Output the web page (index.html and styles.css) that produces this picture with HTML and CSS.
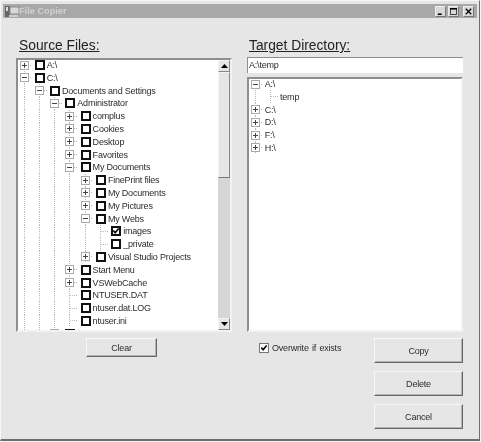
FILE: index.html
```html
<!DOCTYPE html>
<html lang="en">
<head>
<meta charset="utf-8">
<title>File Copier</title>
<link rel="stylesheet" href="styles.css">
</head>
<body>
<div class="window">
  <div class="titlebar">
    <svg class="appicon" width="15" height="13" viewBox="0 0 15 13"><rect x="0" y="1" width="5" height="11" fill="#666"/><rect x="1" y="2" width="2" height="4" fill="#ddd"/><rect x="5" y="2" width="9" height="7" fill="#d8d8d8" stroke="#8a8a8a"/><rect x="4" y="10" width="9" height="2" fill="#ccc"/></svg>
    <span class="title">File Copier</span>
    <div class="controls">
      <button class="ctl"><svg width="9" height="9" viewBox="0 0 9 9"><rect x="1" y="7" width="5" height="2" fill="#000"/></svg></button>
      <button class="ctl maxbtn"><svg width="9" height="9" viewBox="0 0 9 9"><path d="M0 .5h8.5v8H.5V1" fill="none" stroke="#000"/><rect x="0" y="0" width="9" height="2" fill="#000"/></svg></button>
      <button class="ctl closebtn"><svg width="9" height="9" viewBox="0 0 9 9"><path d="M1 1l7 7M8 1L1 8" stroke="#000" stroke-width="1.6" fill="none"/></svg></button>
    </div>
  </div>
  <div class="content">
    <div class="col">
      <h2 class="heading">Source Files:</h2>
      <div class="tree source">
        <div class="rows">
          <div class="row"><span class="exp plus"></span><span class="cb"></span><span class="lbl">A:\</span></div>
          <div class="row"><span class="exp minus"></span><span class="cb"></span><span class="lbl">C:\</span></div>
          <div class="row"><span class="g"></span><span class="exp minus"></span><span class="cb"></span><span class="lbl">Documents and Settings</span></div>
          <div class="row"><span class="g"></span><span class="g"></span><span class="exp minus"></span><span class="cb"></span><span class="lbl">Administrator</span></div>
          <div class="row"><span class="g"></span><span class="g"></span><span class="g"></span><span class="exp plus"></span><span class="cb"></span><span class="lbl">complus</span></div>
          <div class="row"><span class="g"></span><span class="g"></span><span class="g"></span><span class="exp plus"></span><span class="cb"></span><span class="lbl">Cookies</span></div>
          <div class="row"><span class="g"></span><span class="g"></span><span class="g"></span><span class="exp plus"></span><span class="cb"></span><span class="lbl">Desktop</span></div>
          <div class="row"><span class="g"></span><span class="g"></span><span class="g"></span><span class="exp plus"></span><span class="cb"></span><span class="lbl">Favorites</span></div>
          <div class="row"><span class="g"></span><span class="g"></span><span class="g"></span><span class="exp minus"></span><span class="cb"></span><span class="lbl">My Documents</span></div>
          <div class="row"><span class="g"></span><span class="g"></span><span class="g"></span><span class="g"></span><span class="exp plus"></span><span class="cb"></span><span class="lbl">FinePrint files</span></div>
          <div class="row"><span class="g"></span><span class="g"></span><span class="g"></span><span class="g"></span><span class="exp plus"></span><span class="cb"></span><span class="lbl">My Documents</span></div>
          <div class="row"><span class="g"></span><span class="g"></span><span class="g"></span><span class="g"></span><span class="exp plus"></span><span class="cb"></span><span class="lbl">My Pictures</span></div>
          <div class="row"><span class="g"></span><span class="g"></span><span class="g"></span><span class="g"></span><span class="exp minus"></span><span class="cb"></span><span class="lbl">My Webs</span></div>
          <div class="row"><span class="g"></span><span class="g"></span><span class="g"></span><span class="g"></span><span class="g"></span><span class="tee"></span><span class="cb on"><svg width="9" height="9" viewBox="0 0 9 9"><path d="M1.5 4l2 2.4L7.5 1.8" fill="none" stroke="#000" stroke-width="1.8"/></svg></span><span class="lbl">images</span></div>
          <div class="row"><span class="g"></span><span class="g"></span><span class="g"></span><span class="g"></span><span class="g"></span><span class="tee"></span><span class="cb"></span><span class="lbl">_private</span></div>
          <div class="row"><span class="g"></span><span class="g"></span><span class="g"></span><span class="g"></span><span class="exp plus"></span><span class="cb"></span><span class="lbl">Visual Studio Projects</span></div>
          <div class="row"><span class="g"></span><span class="g"></span><span class="g"></span><span class="exp plus"></span><span class="cb"></span><span class="lbl">Start Menu</span></div>
          <div class="row"><span class="g"></span><span class="g"></span><span class="g"></span><span class="exp plus"></span><span class="cb"></span><span class="lbl">VSWebCache</span></div>
          <div class="row"><span class="g"></span><span class="g"></span><span class="g"></span><span class="tee"></span><span class="cb"></span><span class="lbl">NTUSER.DAT</span></div>
          <div class="row"><span class="g"></span><span class="g"></span><span class="g"></span><span class="tee"></span><span class="cb"></span><span class="lbl">ntuser.dat.LOG</span></div>
          <div class="row"><span class="g"></span><span class="g"></span><span class="g"></span><span class="tee"></span><span class="cb"></span><span class="lbl">ntuser.ini</span></div>
          <div class="row"><span class="g"></span><span class="g"></span><span class="exp plus"></span><span class="cb"></span><span class="lbl">All Users</span></div>
        </div>
        <div class="scrollbar">
          <div class="arrow"><svg width="7" height="4" viewBox="0 0 7 4"><path d="M3.5 0L7 4H0z" fill="#000"/></svg></div>
          <div class="thumb"></div>
          <div class="track"></div>
          <div class="arrow"><svg width="7" height="4" viewBox="0 0 7 4"><path d="M0 0h7L3.5 4z" fill="#000"/></svg></div>
        </div>
      </div>
      <div class="clear-wrap"><button class="btn clear">Clear</button></div>
    </div>
    <div class="col">
      <h2 class="heading heading-target">Target Directory:</h2>
      <div class="path">A:\temp</div>
      <div class="tree target">
        <div class="rows">
          <div class="row"><span class="exp minus"></span><span class="lbl">A:\</span></div>
          <div class="row"><span class="g"></span><span class="tee"></span><span class="lbl">temp</span></div>
          <div class="row"><span class="exp plus"></span><span class="lbl">C:\</span></div>
          <div class="row"><span class="exp plus"></span><span class="lbl">D:\</span></div>
          <div class="row"><span class="exp plus"></span><span class="lbl">F:\</span></div>
          <div class="row"><span class="exp plus"></span><span class="lbl">H:\</span></div>
        </div>
      </div>
      <div class="bottom">
        <label class="overwrite"><span class="cb small"><svg width="9" height="9" viewBox="0 0 9 9"><path d="M1.5 4l2 2.4L7.5 1.8" fill="none" stroke="#000" stroke-width="1.8"/></svg></span><span class="ow-text">Overwrite if exists</span></label>
        <div class="actions">
          <button class="btn act">Copy</button>
          <button class="btn act">Delete</button>
          <button class="btn act">Cancel</button>
        </div>
      </div>
    </div>
  </div>
</div>
</body>
</html>
```
FILE: styles.css
```css
* { box-sizing: border-box; }
html, body { margin: 0; padding: 0; }
body {
  width: 481px;
  height: 442px;
  overflow: hidden;
  background: #f4f4f4;
  font-family: "Liberation Sans", Arial, sans-serif;
  font-size: 9px;
  letter-spacing: -0.2px;
  color: #2c2c2c;
}
.window {
  width: 480px;
  height: 441px;
  padding: 3px 2px 0 2px;
  background: #e6e6e6;
  border-right: 1px solid #6e6e6e;
  border-bottom: 2px solid #6e6e6e;
  border-top: 1px solid #f6f6f6;
  border-left: 1px solid #f6f6f6;
  display: flex;
  flex-direction: column;
  filter: blur(0.3px);
}
.titlebar {
  height: 14px;
  flex: none;
  background: #a8a8a8;
  display: flex;
  align-items: center;
  padding: 0 3px 0 2px;
}
.appicon { flex: none; margin-right: -1px; }
.title {
  color: #d0d0d0;
  font-weight: bold;
  font-size: 9.2px;
  letter-spacing: 0;
  flex: 1;
}
.controls { display: flex; }
.ctl {
  width: 11px;
  height: 11px;
  padding: 0;
  margin: 0;
  background: #d8d8d8;
  border: 1px solid;
  border-color: #eee #777 #777 #eee;
  display: flex;
  align-items: center;
  justify-content: center;
}
.ctl svg { width: 7px; height: 7px; }
.maxbtn { margin-left: 2px; }
.closebtn { margin-left: 4px; }
.content {
  flex: 1;
  display: flex;
  gap: 15px;
  padding: 19px 0 0 13px;
}
.col { width: 216px; flex: none; display: flex; flex-direction: column; }
.heading {
  margin: 0;
  height: 21px;
  padding-left: 3px;
  font-size: 13.8px;
  letter-spacing: 0;
  line-height: 17px;
  font-weight: normal;
  text-decoration: underline;
  color: #222;
}
.heading-target { padding-left: 2px; }
.tree {
  background: #fff;
  border: 2px solid;
  border-color: #8e8e8e #f2f2f2 #f2f2f2 #8e8e8e;
  overflow: hidden;
}
.source {
  height: 274px;
  display: flex;
}
.rows { flex: 1; min-width: 0; overflow: hidden; margin: -1.4px 0 0 -1.6px; }
.row {
  display: flex;
  align-items: center;
  height: 12.8px;
  white-space: nowrap;
}
.g, .exp, .tee {
  flex: none;
  width: 15.3px;
  height: 100%;
  background-repeat: no-repeat;
}
.g {
  background-image: repeating-linear-gradient(to bottom, #bbb 0 1px, transparent 1px 2px);
  background-size: 1px 100%;
  background-position: 50% 0;
}
.tee {
  background-image:
    repeating-linear-gradient(to bottom, #bbb 0 1px, transparent 1px 2px),
    repeating-linear-gradient(to right, #bbb 0 1px, transparent 1px 2px);
  background-size: 1px 100%, 50% 1px;
  background-position: 50% 0, 100% 50%;
}
.plus {
  background-image:
    linear-gradient(#444, #444),
    linear-gradient(#444, #444),
    linear-gradient(#fff, #fff),
    linear-gradient(#aaa, #aaa),
    repeating-linear-gradient(to bottom, #bbb 0 1px, transparent 1px 2px),
    repeating-linear-gradient(to right, #bbb 0 1px, transparent 1px 2px);
  background-size: 5px 1px, 1px 5px, 7px 7px, 9px 9px, 1px 100%, 50% 1px;
  background-position: 50% 50%, 50% 50%, 50% 50%, 50% 50%, 50% 0, 100% 50%;
}
.minus {
  background-image:
    linear-gradient(#444, #444),
    linear-gradient(#fff, #fff),
    linear-gradient(#aaa, #aaa),
    repeating-linear-gradient(to bottom, #bbb 0 1px, transparent 1px 2px),
    repeating-linear-gradient(to right, #bbb 0 1px, transparent 1px 2px);
  background-size: 5px 1px, 7px 7px, 9px 9px, 1px 100%, 50% 1px;
  background-position: 50% 50%, 50% 50%, 50% 50%, 50% 0, 100% 50%;
}
.cb {
  flex: none;
  width: 10px;
  height: 10px;
  margin-left: 3px;
  border: 2px solid #111;
  background: #fff;
  display: flex;
  align-items: center;
  justify-content: center;
}
.cb svg { width: 8px; height: 8px; flex: none; }
.lbl { margin-left: 2px; }
.scrollbar {
  flex: none;
  width: 12px;
  display: flex;
  flex-direction: column;
  background: #d6d6d6;
}
.arrow {
  height: 12px;
  flex: none;
  background: #e6e6e6;
  border: 1px solid;
  border-color: #f4f4f4 #888 #888 #f4f4f4;
  display: flex;
  align-items: center;
  justify-content: center;
}
.thumb {
  height: 106px;
  flex: none;
  background: #e6e6e6;
  border: 1px solid;
  border-color: #f4f4f4 #888 #777 #f4f4f4;
}
.track { flex: 1; background: #d6d6d6; }
.clear-wrap { padding: 6px 0 0 70px; }
.btn {
  padding: 0;
  margin: 0;
  font: inherit;
  letter-spacing: inherit;
  color: #2c2c2c;
  background: #e6e6e6;
  border: 1px solid;
  border-color: #f8f8f8 #666 #666 #f8f8f8;
  box-shadow: inset -1px -1px 0 #b4b4b4;
}
.clear { width: 71px; height: 19px; }
.path {
  height: 16px;
  margin-top: -1px;
  padding-left: 1px;
  line-height: 15px;
  background: #fff;
  border-top: 1px solid #8e8e8e;
  border-left: 1px solid #8e8e8e;
}
.target { height: 255px; margin-top: 4px; }
.bottom {
  display: flex;
  justify-content: space-between;
  padding-top: 6px;
}
.overwrite {
  display: flex;
  align-items: center;
  align-self: flex-start;
  height: 10px;
  margin: 5px 0 0 12px;
}
.ow-text { word-spacing: 1px; }
.cb.small { width: 10px; height: 10px; margin: 0 3px 0 0; border: 1px solid #777; }
.actions { display: flex; flex-direction: column; gap: 8px; }
.act { width: 89px; height: 25px; }
```
